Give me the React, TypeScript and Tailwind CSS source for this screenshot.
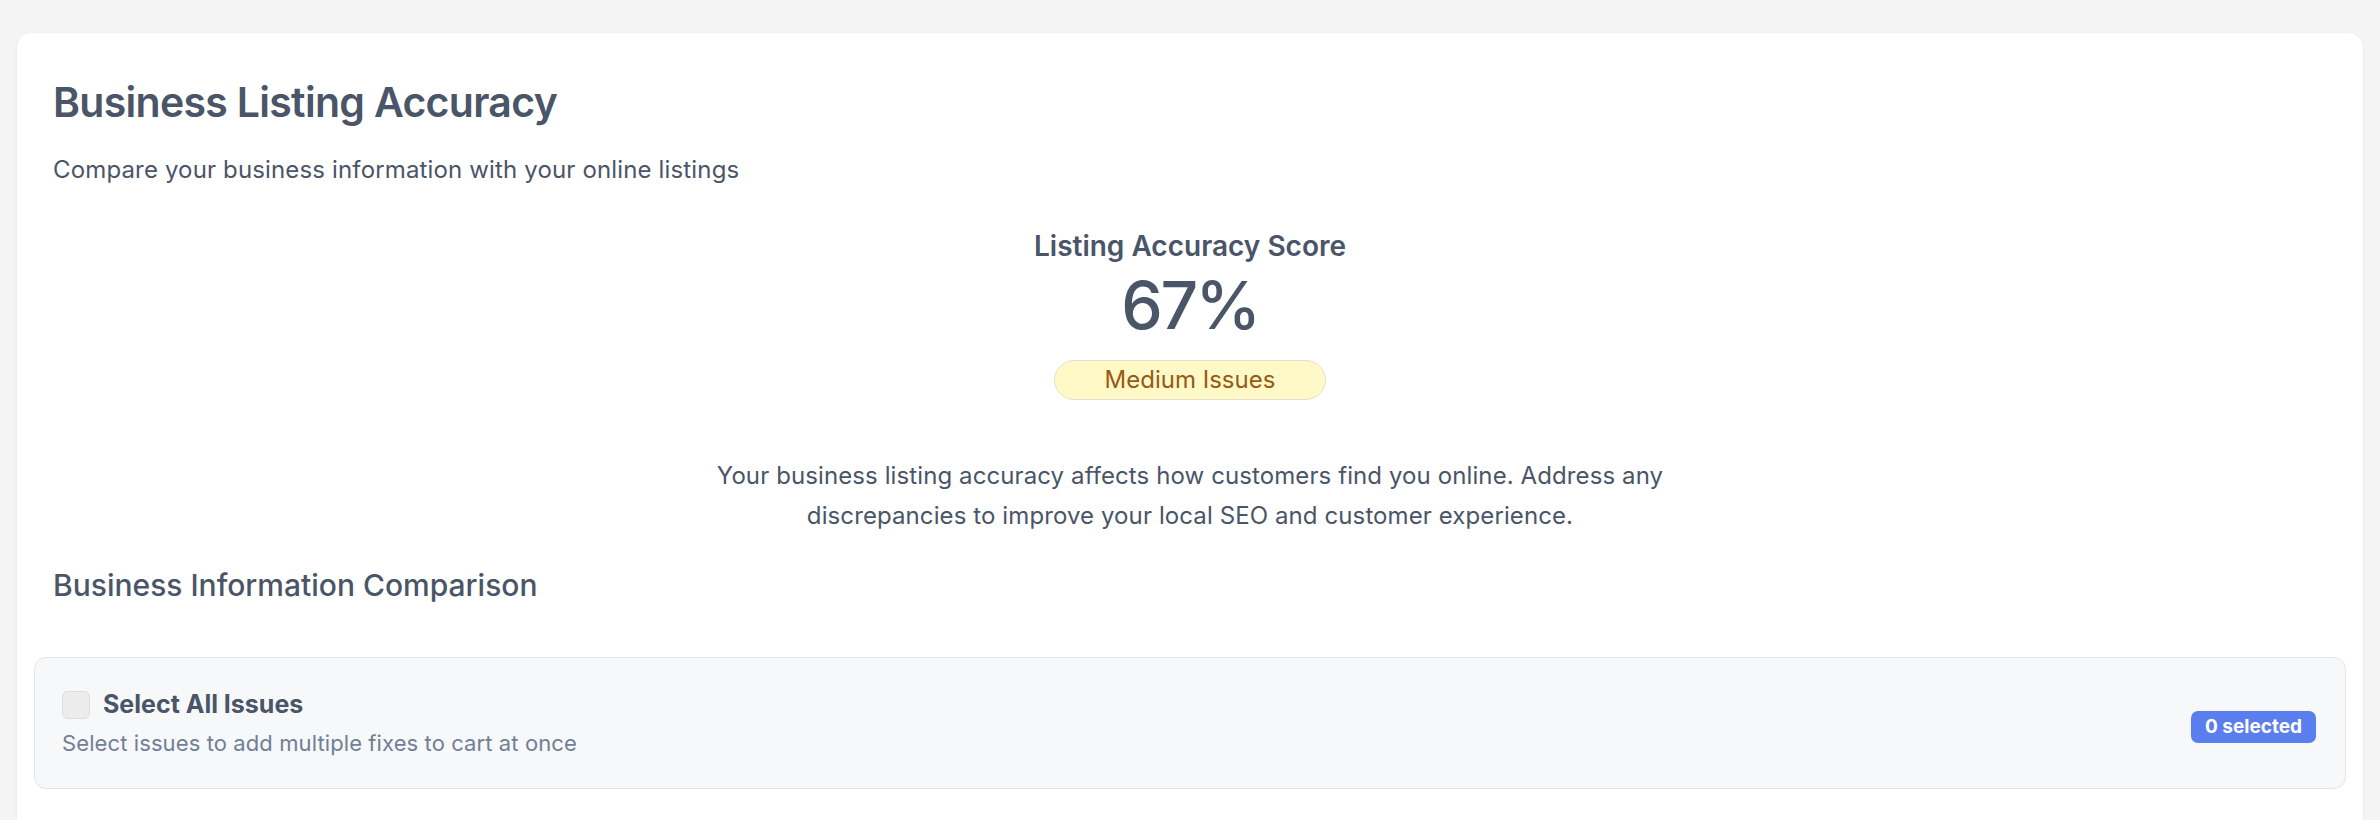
import React, { useState } from 'react';

const App: React.FC = () => {
  const [selectAll, setSelectAll] = useState(false);
  const selectedCount = 0;

  return (
    <div
      className="min-h-screen bg-[#f4f4f4] px-[17px] pt-[33px] text-[#4a5568]"
      style={{ fontFamily: 'Inter, "Noto Sans", sans-serif' }}
    >
      <div className="bg-white rounded-[15px] shadow-[0_1px_3px_rgba(0,0,0,0.06)] min-h-[800px]">
        {/* Header */}
        <div className="px-[36px] pt-[44px]">
          <h1 className="text-[41px] leading-[50px] font-semibold tracking-[-0.7px]">Business Listing Accuracy</h1>
          <p className="mt-[25px] text-[24px] leading-[36px] tracking-[0.15px]">Compare your business information with your online listings</p>
        </div>

        {/* Score */}
        <div className="flex flex-col items-center mt-[38px]">
          <h2 className="text-[28px] leading-[40px] font-semibold">Listing Accuracy Score</h2>
          <div className="mt-[6px] text-[66px] leading-[66px] font-medium tracking-[-2.5px]">67%</div>
          <span className="mt-[22px] rounded-full border border-[#e5e1c8] bg-[#fef9c6] px-[50px] py-[1px] text-[24px] leading-[36px] text-[#975a16]">
            Medium Issues
          </span>
          <p className="mt-[56px] max-w-[1010px] text-center text-[24px] leading-[40px] tracking-[0.1px]">
            Your business listing accuracy affects how customers find you online. Address any discrepancies to improve your local SEO and customer experience.
          </p>
        </div>

        {/* Comparison */}
        <div className="px-[36px] mt-[27px]">
          <h3 className="text-[30px] leading-[45px] font-medium">Business Information Comparison</h3>
        </div>

        <div className="px-[17px] mt-[49px]">
          <div className="flex items-center justify-between rounded-[12px] border border-[#e2e5ea] bg-[#f7f8fa] px-[27px] pt-[28px] pb-[29px]">
            <div className="flex flex-col">
              <label className="flex items-center gap-[13px] cursor-pointer">
                <input
                  type="checkbox"
                  checked={selectAll}
                  onChange={(e) => setSelectAll(e.target.checked)}
                  className="appearance-none w-[28px] h-[28px] rounded-[6px] border border-[#dcdcdc] bg-[#ececec]"
                />
                <span className="text-[25px] leading-[37px] font-bold">Select All Issues</span>
              </label>
              <p className="mt-[5px] text-[22px] leading-[31px] text-[#718096] tracking-[0.1px]">Select issues to add multiple fixes to cart at once</p>
            </div>
            <span className="mt-[8px] mr-[2px] rounded-[7px] bg-[#5a7eee] px-[14px] py-[4px] text-[19px] leading-[24px] font-bold text-white">
              {selectedCount} selected
            </span>
          </div>
        </div>
      </div>
    </div>
  );
};

export default App;
